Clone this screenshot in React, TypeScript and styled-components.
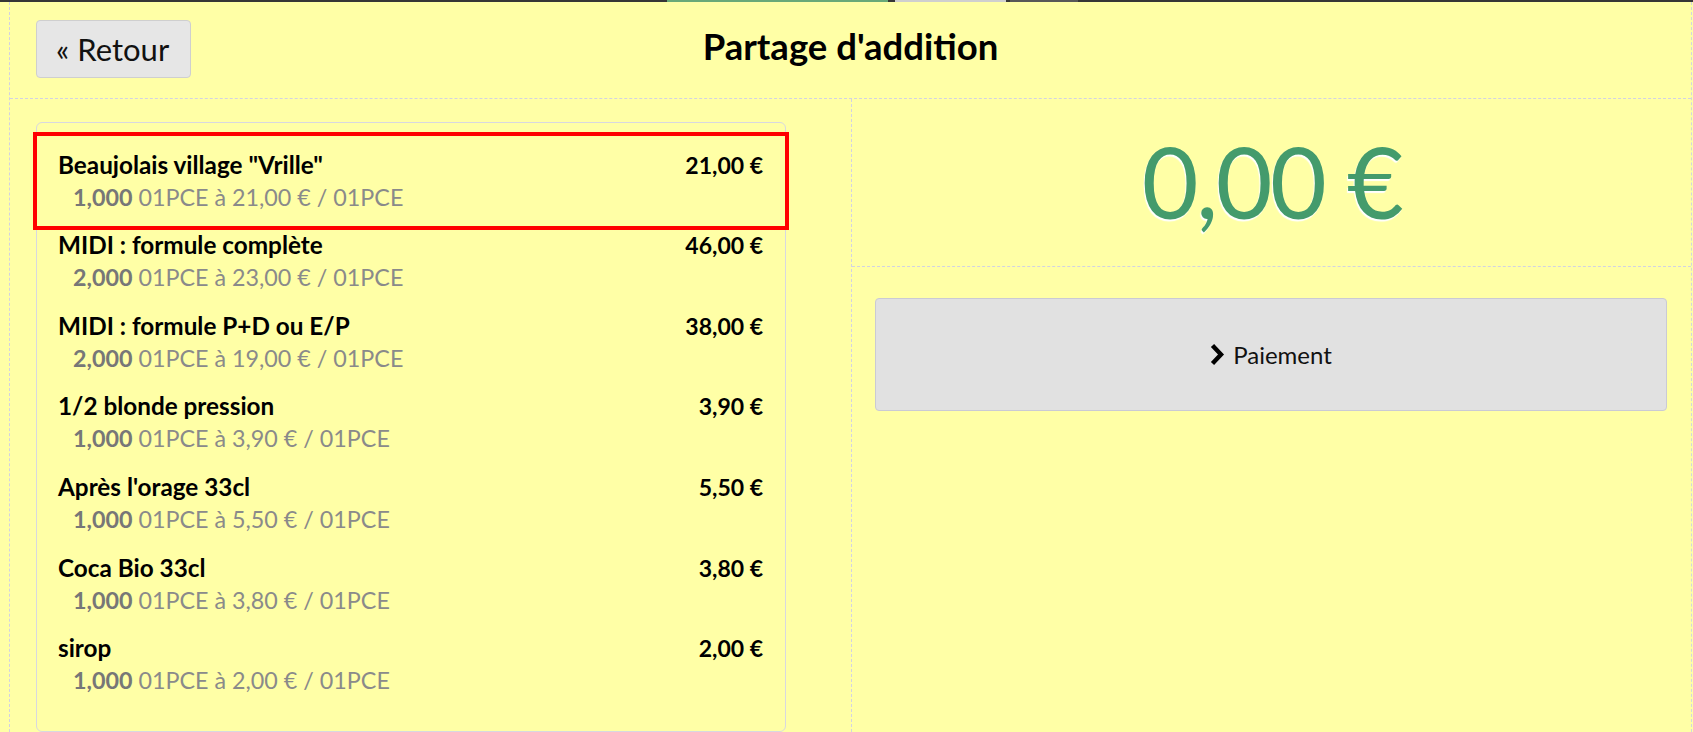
import React from "react";
import styled, { createGlobalStyle } from "styled-components";

const Global = createGlobalStyle`
  html, body { margin: 0; padding: 0; background: #ffffa6; }
  body { font-family: Lato, "Noto Sans", "Liberation Sans", sans-serif; color: #000; }
  * { box-sizing: border-box; }
`;

const Page = styled.div`
  min-height: 100vh;
  background: #ffffa6;
  overflow: hidden;
`;

const TabStrip = styled.div`
  display: flex;
  height: 2px;
  background: #363636;
`;

const Segment = styled.div<{ $w: number; $c: string }>`
  flex: 0 0 ${(p) => p.$w}px;
  background: ${(p) => p.$c};
`;

const Frame = styled.div`
  margin-left: 9px;
  width: 1683px;
  border-left: 1px dashed #d2d2e2;
  border-right: 1px dashed #d2d2e2;
  min-height: 730px;
`;

const Header = styled.header`
  display: grid;
  grid-template-columns: 1fr auto 1fr;
  align-items: start;
  height: 97px;
  padding: 18px 26px 0 26px;
  border-bottom: 1px dashed #d2d2e2;
`;

const BackButton = styled.button`
  justify-self: start;
  display: flex;
  align-items: center;
  height: 58px;
  width: 155px;
  padding: 0 0 0 19px;
  background: #e6e6e6;
  border: 1px solid #cfcfcf;
  border-radius: 4px;
  font-family: Lato, "Noto Sans", sans-serif;
  font-size: 31px;
  line-height: 1;
  color: #111;
`;

const Guillemet = styled.span`
  margin-right: 8px;
`;

const Title = styled.h1`
  margin: 4px 0 0 0;
  font-size: 36.5px;
  line-height: 44px;
  font-weight: 700;
  color: #000;
`;

const Body = styled.div`
  display: grid;
  grid-template-columns: 842px 1fr;
  min-height: 633px;
`;

const LeftCol = styled.div`
  padding: 23px 0 0 26px;
  border-right: 1px dashed #d2d2e2;
`;

const Panel = styled.div`
  width: 750px;
  border: 1px solid #d8d8e0;
  border-radius: 6px;
  padding: 17px 0 26px 0;
`;

const Item = styled.div<{ $selected?: boolean }>`
  position: relative;
  height: 80.67px;
  padding: 8.5px 22px 0 21px;
  line-height: 32px;
  &::after {
    content: "";
    display: ${(p) => (p.$selected ? "block" : "none")};
    position: absolute;
    left: -4px;
    right: -4px;
    top: -8px;
    bottom: -9px;
    border: 4px solid #ff0000;
    pointer-events: none;
  }
`;

const NameRow = styled.div`
  display: flex;
  justify-content: space-between;
  align-items: baseline;
  font-weight: 700;
  font-size: 24.3px;
`;

const Price = styled.span`
  font-size: 23px;
`;

const Sub = styled.div`
  padding-left: 15px;
  font-size: 23.3px;
  color: #8a8a8a;
`;

const Qty = styled.b`
  font-weight: 700;
  color: #777;
`;

const RightCol = styled.div`
  display: flex;
  flex-direction: column;
`;

const TotalCell = styled.div`
  height: 168px;
  border-bottom: 1px dashed #d2d2e2;
  display: flex;
  align-items: center;
  justify-content: center;
  padding-bottom: 2px;
`;

const Total = styled.div`
  font-size: 98px;
  line-height: 1.2;
  letter-spacing: -2.5px;
  color: #449b6c;
  text-shadow: -1px 2px 1px #ffffff;
`;

const PayCell = styled.div`
  padding: 31px 24px 0 23px;
`;

const PayButton = styled.button`
  width: 100%;
  height: 113px;
  display: flex;
  align-items: center;
  justify-content: center;
  gap: 8px;
  background: #e1e1e1;
  border: 1px solid #cacad4;
  border-radius: 4px;
  font-family: Lato, "Noto Sans", sans-serif;
  font-size: 24px;
  color: #111;
`;

const Chevron = () => (
  <svg width="15" height="23" viewBox="0 0 15 23" aria-hidden="true">
    <path d="M2.5 2.5 L11 11.5 L2.5 20.5" fill="none" stroke="#000" strokeWidth="4.4" strokeLinejoin="miter" />
  </svg>
);

const segments = [
  { w: 667, c: "#363636" },
  { w: 221, c: "#69a978" },
  { w: 7, c: "#363636" },
  { w: 111, c: "#cfcfcf" },
  { w: 4, c: "#363636" },
  { w: 68, c: "#585858" },
  { w: 615, c: "#363636" },
];

const items = [
  { name: 'Beaujolais village "Vrille"', price: "21,00 €", qty: "1,000", unit: "21,00 €", selected: true },
  { name: "MIDI : formule complète", price: "46,00 €", qty: "2,000", unit: "23,00 €" },
  { name: "MIDI : formule P+D ou E/P", price: "38,00 €", qty: "2,000", unit: "19,00 €" },
  { name: "1/2 blonde pression", price: "3,90 €", qty: "1,000", unit: "3,90 €" },
  { name: "Après l'orage 33cl", price: "5,50 €", qty: "1,000", unit: "5,50 €" },
  { name: "Coca Bio 33cl", price: "3,80 €", qty: "1,000", unit: "3,80 €" },
  { name: "sirop", price: "2,00 €", qty: "1,000", unit: "2,00 €" },
];

export default function App() {
  return (
    <Page>
      <Global />
      <TabStrip>
        {segments.map((s, i) => (
          <Segment key={i} $w={s.w} $c={s.c} />
        ))}
      </TabStrip>
      <Frame>
        <Header>
          <BackButton>
            <Guillemet>«</Guillemet>Retour
          </BackButton>
          <Title>Partage d'addition</Title>
          <div />
        </Header>
        <Body>
          <LeftCol>
            <Panel>
              {items.map((it) => (
                <Item key={it.name} $selected={it.selected}>
                  <NameRow>
                    <span>{it.name}</span>
                    <Price>{it.price}</Price>
                  </NameRow>
                  <Sub>
                    <Qty>{it.qty}</Qty> 01PCE à {it.unit} / 01PCE
                  </Sub>
                </Item>
              ))}
            </Panel>
          </LeftCol>
          <RightCol>
            <TotalCell>
              <Total>0,00 €</Total>
            </TotalCell>
            <PayCell>
              <PayButton>
                <Chevron />
                Paiement
              </PayButton>
            </PayCell>
          </RightCol>
        </Body>
      </Frame>
    </Page>
  );
}
